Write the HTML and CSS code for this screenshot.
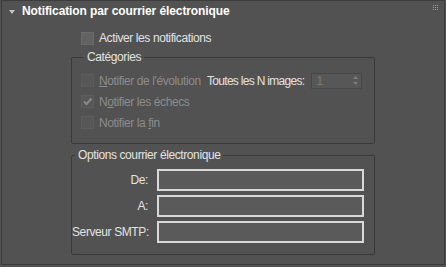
FILE: index.html
```html
<!DOCTYPE html>
<html lang="fr">
<head>
<meta charset="utf-8">
<link rel="stylesheet" href="styles.css">
</head>
<body>
<div class="panel">
  <div class="header">
    <span class="tri"></span>
    <span class="title">Notification par courrier électronique</span>
    <svg class="grip" width="5" height="5" viewBox="0 0 5 5"><g fill="#9a9a9a"><rect x="0" y="0" width="1" height="1"/><rect x="2" y="0" width="1" height="1"/><rect x="4" y="0" width="1" height="1"/><rect x="0" y="2" width="1" height="1"/><rect x="2" y="2" width="1" height="1"/><rect x="4" y="2" width="1" height="1"/><rect x="0" y="4" width="1" height="1"/><rect x="2" y="4" width="1" height="1"/><rect x="4" y="4" width="1" height="1"/></g></svg>
  </div>
  <div class="content">
    <div class="check main"><span class="box"></span><span>Activer les notifications</span></div>
    <fieldset class="group cat">
      <legend>Catégories</legend>
      <div class="row">
        <div class="check dis first"><span class="box"></span><span><u>N</u>otifier de l'évolution</span></div>
        <span class="nlabel">Toutes les N images:</span>
        <div class="spin"><span>1</span><svg width="5" height="9" viewBox="0 0 5 9"><path d="M2.5 0 L5 3 L0 3 Z M0 6 L5 6 L2.5 9 Z" fill="#7c7c7c"/></svg></div>
      </div>
      <div class="row">
        <div class="check dis"><span class="box"><svg width="11" height="11" viewBox="0 0 11 11"><path d="M2 5.5 L4.5 8 L9.5 2.5" stroke="#8a8a8a" stroke-width="2" fill="none"/></svg></span><span>N<u>o</u>tifier les échecs</span></div>
      </div>
      <div class="row">
        <div class="check dis"><span class="box"></span><span>Notifier la <u>f</u>in</span></div>
      </div>
    </fieldset>
    <fieldset class="group opts">
      <legend>Options courrier électronique</legend>
      <div class="form">
        <span class="flabel">De:</span><span class="field"></span>
        <span class="flabel">A:</span><span class="field"></span>
        <span class="flabel">Serveur SMTP:</span><span class="field"></span>
      </div>
    </fieldset>
  </div>
</div>
</body>
</html>
```
FILE: styles.css
```css
html, body {
  margin: 0;
  padding: 0;
  background: #525252;
}
body {
  width: 446px;
  height: 267px;
  overflow: hidden;
  font-family: "Liberation Sans", Arial, sans-serif;
  font-size: 12px;
  letter-spacing: -0.4px;
  color: #e2e2e2;
  white-space: nowrap;
}
.panel {
  margin-left: 1px;
  width: 444px;
  height: 265px;
  box-sizing: border-box;
  border: 1px solid #3c3c3c;
  display: flex;
  flex-direction: column;
}
.header {
  height: 20px;
  display: flex;
  align-items: center;
  padding-left: 7px;
  padding-right: 6px;
}
.tri {
  width: 0;
  height: 0;
  border-left: 3px solid transparent;
  border-right: 3px solid transparent;
  border-top: 4px solid #c4c4c4;
  margin-right: 7px;
  margin-top: 1px;
}
.title {
  font-weight: bold;
  letter-spacing: -0.1px;
  color: #ffffff;
  flex: 1;
}
.grip {
  margin-top: -8px;
}
.content {
  display: flex;
  flex-direction: column;
  padding-left: 69px;
}
.check {
  display: flex;
  align-items: center;
  gap: 5px;
}
.box {
  width: 11px;
  height: 11px;
  flex: none;
  border: 1px solid #5e5e5e;
  background: #5c5c5c;
  display: flex;
  align-items: center;
  justify-content: center;
}
.main {
  margin-top: 9px;
  margin-left: 10px;
  height: 16px;
}
.main .box {
  border-color: #6a6a6a;
  background: #626262;
}
.dis {
  color: #8c8c8c;
}
.dis .box {
  background: #575757;
  border-color: #5d5d5d;
}
.group {
  margin: 0;
  width: 304px;
  box-sizing: border-box;
  border: 1px solid #3a3a3a;
  border-radius: 2px;
  padding: 0 0 0 9px;
  min-width: 0;
}
.group legend {
  line-height: 14px;
  padding: 0 3px;
  margin-left: 3px;
}
.cat {
  margin-top: 4px;
  padding-top: 6px;
  padding-bottom: 10px;
}
.row {
  height: 21px;
  display: flex;
  align-items: center;
}
.first {
  width: 126px;
  flex: none;
}
.nlabel {
  letter-spacing: -0.7px;
}
.spin {
  margin-left: 7px;
  width: 42px;
  height: 14px;
  border: 1px solid #474747;
  background: #575757;
  display: flex;
  align-items: center;
  justify-content: space-between;
  padding: 0 3px 0 4px;
  color: #7a7a7a;
}
.opts {
  margin-top: 4px;
  padding-top: 7px;
  padding-bottom: 11px;
  padding-left: 0;
}
.form {
  display: grid;
  grid-template-columns: 76px 207px;
  column-gap: 9px;
  row-gap: 4px;
  align-items: center;
}
.flabel {
  text-align: right;
}
.field {
  height: 22px;
  box-sizing: border-box;
  border: 2px solid #d8d8d8;
  background: #5a5a5a;
}
```
